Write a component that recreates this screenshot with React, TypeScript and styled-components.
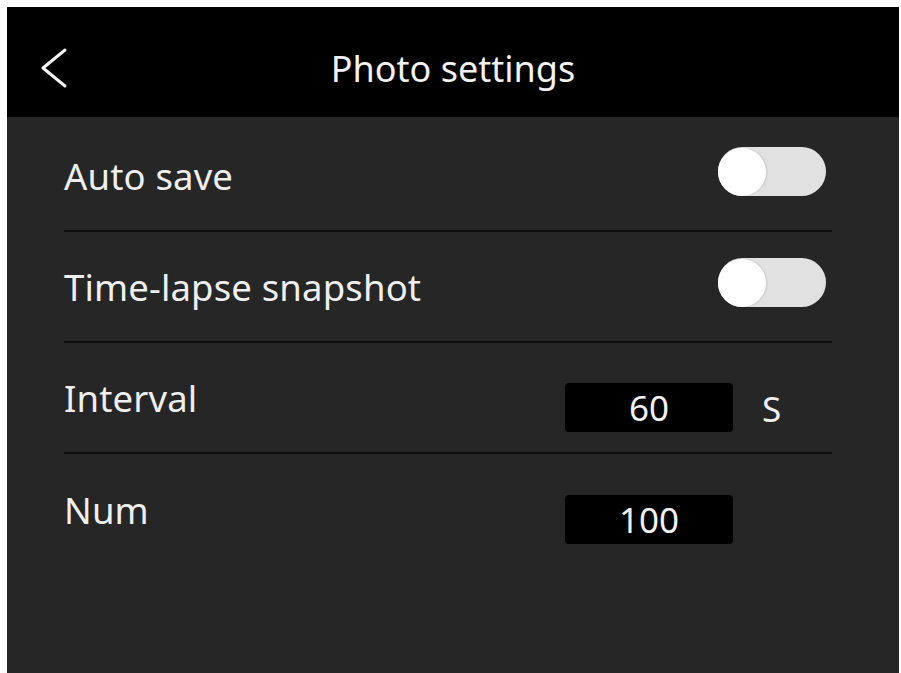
import React from "react";
import styled, { createGlobalStyle } from "styled-components";

const GlobalStyle = createGlobalStyle`
  html, body {
    margin: 0;
    padding: 0;
    background: #ffffff;
  }
  * { box-sizing: border-box; }
`;

const Page = styled.div`
  width: 901px;
  height: 673px;
  padding: 7px 2px 0 7px;
  background: #ffffff;
  font-family: "Noto Sans", "Open Sans", sans-serif;
`;

const Screen = styled.div`
  height: 666px;
  background: #262626;
  display: flex;
  flex-direction: column;
  overflow: hidden;
`;

const Header = styled.header`
  height: 110px;
  flex: none;
  background: #000000;
  display: grid;
  grid-template-columns: 1fr auto 1fr;
  align-items: center;
  padding-top: 12px;
`;

const BackButton = styled.button`
  justify-self: start;
  margin-left: 31px;
  background: none;
  border: none;
  padding: 0;
  display: flex;
  cursor: pointer;
`;

const Title = styled.h1`
  margin: 0;
  font-size: 36px;
  font-weight: 400;
  color: #f2f2f2;
  letter-spacing: 0;
`;

const List = styled.div`
  display: flex;
  flex-direction: column;
  padding: 4px 67px 0 57px;
`;

const Row = styled.div<{ $last?: boolean }>`
  height: 111px;
  display: flex;
  align-items: center;
  border-bottom: ${(p) => (p.$last ? "none" : "2px solid #0e0e0e")};
`;

const Label = styled.span`
  flex: 1;
  font-size: 36.5px;
  letter-spacing: 0.15px;
  color: #efefef;
`;

const Toggle = styled.div<{ $on?: boolean }>`
  width: 108px;
  height: 49px;
  border-radius: 25px;
  background: #e1e1e1;
  display: flex;
  align-items: center;
  justify-content: ${(p) => (p.$on ? "flex-end" : "flex-start")};
  margin-right: 6px;
  margin-bottom: 8px;
`;

const Knob = styled.div`
  width: 48px;
  height: 48px;
  border-radius: 50%;
  background: #ffffff;
  box-shadow: 1px 0 2px rgba(0, 0, 0, 0.12);
`;

const ValueBox = styled.div`
  width: 168px;
  height: 49px;
  margin-top: 20px;
  background: #000000;
  border-radius: 4px;
  display: flex;
  align-items: center;
  justify-content: center;
  font-size: 35px;
  color: #f2f2f2;
`;

const Unit = styled.span`
  width: 70px;
  margin-left: 29px;
  margin-top: 22px;
  font-size: 35px;
  color: #efefef;
`;

const ChevronLeft = () => (
  <svg width="32" height="42" viewBox="0 0 32 42" fill="none">
    <polyline
      points="27,3 5,21 27,39"
      stroke="#f4f4f4"
      strokeWidth="3"
      strokeLinecap="round"
      strokeLinejoin="round"
    />
  </svg>
);

export default function App() {
  return (
    <>
      <GlobalStyle />
      <Page>
        <Screen>
          <Header>
            <BackButton aria-label="Back">
              <ChevronLeft />
            </BackButton>
            <Title>Photo settings</Title>
            <span />
          </Header>
          <List>
            <Row>
              <Label>Auto save</Label>
              <Toggle>
                <Knob />
              </Toggle>
            </Row>
            <Row>
              <Label>Time-lapse snapshot</Label>
              <Toggle>
                <Knob />
              </Toggle>
            </Row>
            <Row>
              <Label>Interval</Label>
              <ValueBox>60</ValueBox>
              <Unit>S</Unit>
            </Row>
            <Row $last>
              <Label>Num</Label>
              <ValueBox>100</ValueBox>
              <Unit />
            </Row>
          </List>
        </Screen>
      </Page>
    </>
  );
}
